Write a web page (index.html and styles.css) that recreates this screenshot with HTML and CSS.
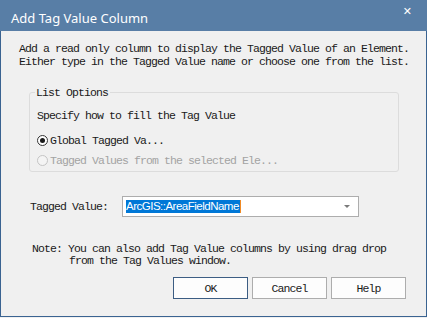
FILE: index.html
```html
<!DOCTYPE html>
<html lang="en">
<head>
    <meta charset="UTF-8">
    <title>Add Tag Value Column</title>
    <link rel="stylesheet" href="styles.css">
</head>
<body>
    <div class="window">
        <div class="title-bar">
            <span class="title">Add Tag Value Column</span>
            <span class="close">&#x2715;</span>
        </div>

        <div class="content">
            <p class="intro">Add a read only column to display the Tagged Value of an Element.<br>Either type in the Tagged Value name or choose one from the list.</p>

            <fieldset class="options">
                <legend>List Options</legend>
                <div class="hint">Specify how to fill the Tag Value</div>
                <label class="radio">
                    <span class="dot checked"></span>Global Tagged Va...
                </label>
                <label class="radio disabled">
                    <span class="dot"></span>Tagged Values from the selected Ele...
                </label>
            </fieldset>

            <div class="field-row">
                <span class="field-label">Tagged Value:</span>
                <div class="combo">
                    <span class="selected">ArcGIS::AreaFieldName</span>
                    <span class="arrow"></span>
                </div>
            </div>

            <p class="note">Note: You can also add Tag Value columns by using drag drop<br><span class="indent">from the Tag Values window.</span></p>

            <div class="buttons">
                <button class="btn default">OK</button>
                <button class="btn">Cancel</button>
                <button class="btn">Help</button>
            </div>
        </div>
    </div>
</body>
</html>
```

FILE: styles.css
```css
body {
    margin: 0;
    padding: 0;
    background: #f0f0f0;
}

.window {
    width: 427px;
    height: 317px;
    box-sizing: border-box;
    border: 1px solid #3a6391;
    border-top: none;
    background: #f0f0f0;
    display: flex;
    flex-direction: column;
    font-family: "Liberation Mono", monospace;
    font-size: 11.5px;
    letter-spacing: -0.9px;
    color: #1a1a1a;
}

.title-bar {
    height: 31px;
    flex-shrink: 0;
    background: #587ea6;
    display: flex;
    align-items: center;
    justify-content: space-between;
    padding: 4px 15px 0 11px;
    box-sizing: border-box;
    margin: 0 -1px;
}

.title {
    font-family: "Noto Sans", sans-serif;
    font-size: 13px;
    letter-spacing: 0;
    color: #fff;
}

.close {
    font-family: "DejaVu Sans", sans-serif;
    font-size: 11px;
    font-weight: bold;
    letter-spacing: 0;
    color: #fff;
    margin-top: -12px;
}

.content {
    padding: 11px 0 0 18px;
}

.intro {
    margin: 0;
    line-height: 13px;
}

.options {
    margin: 18px 0 0 10px;
    width: 370px;
    height: 86px;
    box-sizing: border-box;
    border: 1px solid #dcdcdc;
    border-radius: 3px;
    padding: 10px 0 0 7px;
}

.options legend {
    padding: 0 2px 0 1px;
    margin-left: -2px;
}

.hint {
    line-height: 13px;
}

.radio {
    display: flex;
    align-items: center;
    height: 20px;
    margin-top: 8px;
}

.radio + .radio {
    margin-top: 0;
}

.radio.disabled {
    color: #a3a3a3;
}

.dot {
    width: 11px;
    height: 11px;
    box-sizing: border-box;
    border: 1px solid #333;
    border-radius: 50%;
    margin-right: 2px;
    display: flex;
    align-items: center;
    justify-content: center;
    background: #fff;
}

.dot.checked::after {
    content: "";
    width: 5px;
    height: 5px;
    border-radius: 50%;
    background: #1a1a1a;
}

.disabled .dot {
    border-color: #c4c4c4;
    background: #f4f4f4;
}

.field-row {
    display: flex;
    align-items: center;
    margin: 24px 0 0 11px;
}

.field-label {
    width: 92px;
}

.combo {
    width: 237px;
    height: 21px;
    box-sizing: border-box;
    border: 1px solid #adadad;
    background: #fff;
    display: flex;
    align-items: center;
    justify-content: space-between;
    padding: 0 8px 0 3px;
}

.selected {
    font-family: "Liberation Sans", sans-serif;
    font-size: 11.5px;
    letter-spacing: -0.5px;
    background: #0078d7;
    color: #fff;
    line-height: 13px;
    padding-right: 1px;
    border-right: 1px solid #f08a24;
}

.arrow {
    width: 0;
    height: 0;
    border-left: 3px solid transparent;
    border-right: 3px solid transparent;
    border-top: 3px solid #7a7a7a;
}

.note {
    margin: 26px 0 0 13px;
    line-height: 12px;
}

.indent {
    padding-left: 37px;
}

.buttons {
    display: flex;
    gap: 4px;
    margin: 10px 0 0 154px;
}

.btn {
    width: 75px;
    height: 22px;
    border: 1px solid #adadad;
    background: #fdfdfd;
    font-family: "Liberation Mono", monospace;
    font-size: 11.5px;
    letter-spacing: -0.9px;
    color: #1a1a1a;
    padding: 0;
}

.btn.default {
    border-color: #3c5d83;
}
```
